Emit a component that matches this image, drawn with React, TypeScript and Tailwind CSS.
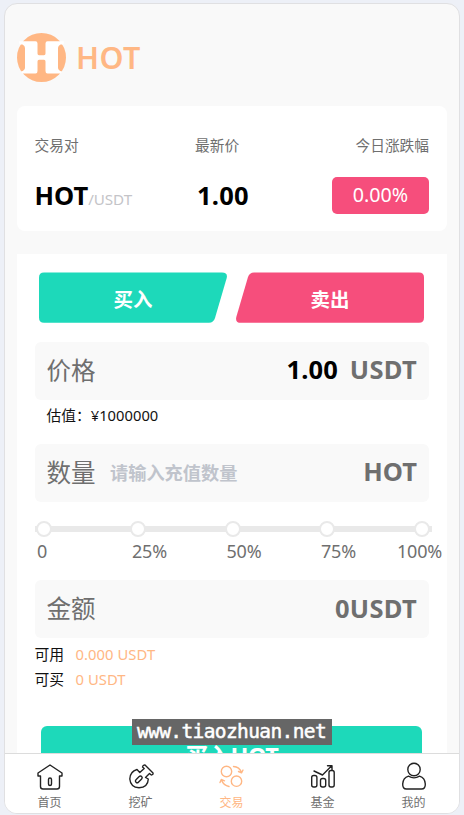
import type { ReactNode } from 'react';

const stops = ['0', '25%', '50%', '75%', '100%'];

function Logo() {
  return (
    <svg className="w-[49px] h-[49px]" viewBox="0 0 49 49">
      <circle cx="24.5" cy="24.5" r="24.5" fill="#ffb784" />
      <path
        fill="#fff"
        d="M2 8.300H18.500Q20.500 8.300 20.500 10.500V20.500Q20.500 22.300 22 22.300H27Q28.500 22.300 28.500 20.500V10.500Q28.500 8.300 30.500 8.300H47L46.500 11.500H43.500Q41 12.500 41 15V34.500Q41 37.500 45 38.500L44 40.500H30.500Q28.500 40.500 28.500 38V28.500Q28.500 26.800 27 26.800H22Q20.500 26.800 20.500 28.500V38Q20.500 40.500 18.500 40.500H5L4 38.500Q8 37.500 8 34.500V15Q8 12.500 5.500 11.500H2.500Z"
      />
    </svg>
  );
}

function PairCard() {
  return (
    <section className="ml-[12.5px] mr-[13px] h-[124.5px] pl-[18px] pr-[18px] pt-[30px] bg-white rounded-[8px]">
      <div className="flex h-[18px] text-[14.7px] leading-[18px] text-[#6f6f6f]">
        <span className="w-[160.5px]">交易对</span>
        <span>最新价</span>
        <span className="ml-auto">今日涨跌幅</span>
      </div>
      <div className="flex items-center h-[37px] mt-[23px]">
        <div className="flex items-baseline w-[162.5px] pb-[2px]">
          <b className="text-[25.5px] leading-[34px] font-bold tracking-[0px] text-black">HOT</b>
          <span className="text-[15.2px] tracking-[-0.05px] text-[#c4c4c8]">/USDT</span>
        </div>
        <b className="pb-[2px] text-[25.5px] leading-[34px] font-bold tracking-[0.2px] text-black">1.00</b>
        <div className="ml-auto w-[97px] h-[37px] rounded-[5px] bg-[#f64e7c] text-white text-[19.7px] leading-[36px] text-center">
          0.00%
        </div>
      </div>
    </section>
  );
}

function SideTabs() {
  return (
    <div className="flex gap-[9px] ml-[4.5px] h-[51px] text-[19.5px] font-bold text-white">
      <button className="grid w-[188px] h-[51px] place-items-center">
        <svg className="col-start-1 row-start-1 w-[188px] h-[51px]" viewBox="0 0 188 51">
          <path fill="#1dd9ba" d="M5 .5H183Q189 .5 187.700 6L176 46Q174.500 50.800 170 50.800H5Q0 50.800 0 45.500V5.500Q0 .5 5 .5Z" />
        </svg>
        <span className="col-start-1 row-start-1 pt-[5px]">买入</span>
      </button>
      <button className="grid w-[188px] h-[51px] place-items-center">
        <svg className="col-start-1 row-start-1 w-[188px] h-[51px]" viewBox="0 0 188 51">
          <path fill="#f64e7c" d="M18 .5H183Q188 .5 188 5.500V45.500Q188 50.800 183 50.800H5Q-1 50.800 .3 45L12 5Q13.500 .5 18 .5Z" />
        </svg>
        <span className="col-start-1 row-start-1 pt-[5px]">卖出</span>
      </button>
    </div>
  );
}

function Field({ label, children }: { label: string; children: ReactNode }) {
  return (
    <div className="flex items-center h-[58px] px-[12px] rounded-[6px] bg-[#f9f9f9] text-[24.5px] text-[#6f6f6f]">
      <span className="pt-[1px]">{label}</span>
      {children}
    </div>
  );
}

function Slider() {
  return (
    <div className="mt-[19px] h-[59.5px]">
      <div className="grid items-center h-[16px] w-[397px]">
        <div className="col-start-1 row-start-1 h-[6px] bg-[#e9e9e9]" />
        <div className="col-start-1 row-start-1 flex justify-between pl-[1px] pr-[1.5px]">
          {stops.map((s) => (
            <i key={s} className="w-[16px] h-[16px] rounded-full border-2 border-[#e9e9e9] bg-white" />
          ))}
        </div>
      </div>
      <div className="grid grid-cols-[95px_94.500px_94.500px_76px_50px] ml-[2.5px] mt-[2.5px] text-[18px] leading-[24px] tracking-[-0.2px] text-[#6f6f6f]">
        {stops.map((s) => (
          <span key={s}>{s}</span>
        ))}
      </div>
    </div>
  );
}

function HomeIcon() {
  return (
    <>
      <path d="M2 10 14 2 26 10V13H23.500V23.500Q23.500 26 21 26H7Q4.500 26 4.500 23.500V13H2Z" />
      <rect x="12.500" y="15" width="3" height="7.500" rx="1.500" />
    </>
  );
}

function MineIcon() {
  return (
    <>
      <path d="M10 6.500Q3 8.500 2.800 16Q3.500 24.300 12 24.800Q21 24.300 21.300 16L18.500 14.500 22.500 10.500 24.300 12Q26.500 11.800 26 10L18 2Q15.800 1.800 15.500 4L17.200 5.500 12.800 9.500Z" />
      <rect x="7.800" y="14.700" width="8" height="3.400" rx="1.700" transform="rotate(-45 11.800 16.400)" />
    </>
  );
}

function TradeIcon() {
  return (
    <>
      <circle cx="8.500" cy="8.500" r="5.200" />
      <circle cx="18.500" cy="18.200" r="5.200" />
      <path d="M15.500 3.500Q21.500 3.800 23.500 9.500M20.500 8.500 23.500 9.800 25 7M11 23.500Q5.500 22.500 3.500 17M2 19.500 3.300 16.500 6.500 17.800" />
    </>
  );
}

function FundIcon() {
  return (
    <>
      <rect x="2.700" y="12.500" width="5.200" height="11.500" rx="2" />
      <rect x="11.500" y="15.500" width="5.200" height="8.500" rx="2" />
      <rect x="20" y="7.500" width="5.200" height="16.500" rx="2" />
      <path d="M5 8 13.500 12 22.500 3M18.500 2.700H23V7" />
    </>
  );
}

function UserIcon() {
  return (
    <>
      <circle cx="14" cy="6.500" r="6.200" />
      <path d="M8.500 13.200Q3 15 2.700 21Q2.500 26 6.500 26H21.500Q25.500 26 25.300 21Q25 15 19.500 13.200Q14 16.500 8.500 13.200Z" />
    </>
  );
}

const tabs = [
  { label: '首页', icon: <HomeIcon /> },
  { label: '挖矿', icon: <MineIcon /> },
  { label: '交易', icon: <TradeIcon />, active: true },
  { label: '基金', icon: <FundIcon /> },
  { label: '我的', icon: <UserIcon /> },
];

function TabBar() {
  return (
    <nav className="flex h-[60px] -ml-px border-t border-[#dcdcdc] bg-white">
      {tabs.map((t) => (
        <a
          key={t.label}
          className={
            t.active
              ? 'flex flex-1 flex-col items-center pt-[9px] text-[12px] leading-[18px] text-[#ffb784]'
              : 'flex flex-1 flex-col items-center pt-[9px] text-[12px] leading-[18px] text-[#6f6f6f]'
          }
        >
          <svg
            className="w-[28px] h-[28px] mb-[3px] overflow-visible"
            viewBox="0 0 28 28"
            fill="none"
            stroke={t.active ? '#ffb784' : '#222'}
            strokeWidth="1.4"
            strokeLinejoin="round"
            strokeLinecap="round"
          >
            {t.icon}
          </svg>
          {t.label}
        </a>
      ))}
    </nav>
  );
}

function App() {
  return (
    <div className="relative w-[464px] h-[815px] pl-[4px] pt-[3px] bg-[#edf0f7] overflow-hidden font-['Noto_Sans','Noto_Sans_CJK_SC',sans-serif]">
      <main className="flex flex-col w-[456px] h-[811px] rounded-[13px] border border-[#e0e0e2] bg-[#f9f9f9] overflow-hidden">
        <div className="flex-1 min-h-0 overflow-hidden -mx-px">
          <header className="flex items-center h-[102px] pl-[12.5px] pt-[5px]">
            <Logo />
            <h1 className="ml-[10.5px] text-[30.5px] font-semibold tracking-[0.4px] text-[#ffb784]">HOT</h1>
          </header>
          <PairCard />
          <section className="ml-[12.5px] mr-[13px] mt-[23.5px] pl-[18px] pr-[18px] pt-[18px] h-[600px] bg-white">
            <SideTabs />
            <div className="mt-[19px]">
              <Field label="价格">
                <b className="ml-auto pb-[3px] font-bold text-[25.5px] tracking-[0.1px] text-black">1.00</b>
                <b className="ml-[12px] pb-[3px] font-bold text-[25.5px] tracking-[0.3px]">USDT</b>
              </Field>
            </div>
            <p className="h-[43.5px] pt-[5px] pl-[12px] text-[14.7px] leading-[20px] tracking-[0.05px] text-[#111]">估值：¥1000000</p>
            <Field label="数量">
              <span className="ml-[14.5px] pt-[2px] text-[18.2px] font-bold text-[#c0c4cc]">请输入充值数量</span>
              <b className="ml-auto pb-[2px] font-bold text-[25.5px]">HOT</b>
            </Field>
            <Slider />
            <Field label="金额">
              <b className="ml-auto pb-[2px] font-bold text-[25.5px] tracking-[0.3px]">0USDT</b>
            </Field>
            <div className="grid grid-cols-[41px_1fr] pt-[3.5px] text-[14.8px] leading-[25px] text-[#111]">
              <span>可用</span>
              <span className="tracking-[0.05px] text-[#ffb784]">0.000 USDT</span>
              <span>可买</span>
              <span className="tracking-[0.05px] text-[#ffb784]">0 USDT</span>
            </div>
            <button className="block w-[381px] h-[63px] ml-[6.5px] mt-[34px] rounded-[6px] bg-[#1dd9ba] text-[23.5px] tracking-[-0.6px] font-bold text-white">
              买入HOT
            </button>
          </section>
        </div>
        <TabBar />
      </main>
      <div className="absolute left-[132px] top-[719px] w-[200px] h-[26px] pl-[5px] bg-[#666] text-white text-[19.5px] tracking-[-0.62px] leading-[26px] [-webkit-text-stroke:0.5px_white] font-['DejaVu_Sans_Mono',monospace]">
        www.tiaozhuan.net
      </div>
    </div>
  );
}

export default App;
